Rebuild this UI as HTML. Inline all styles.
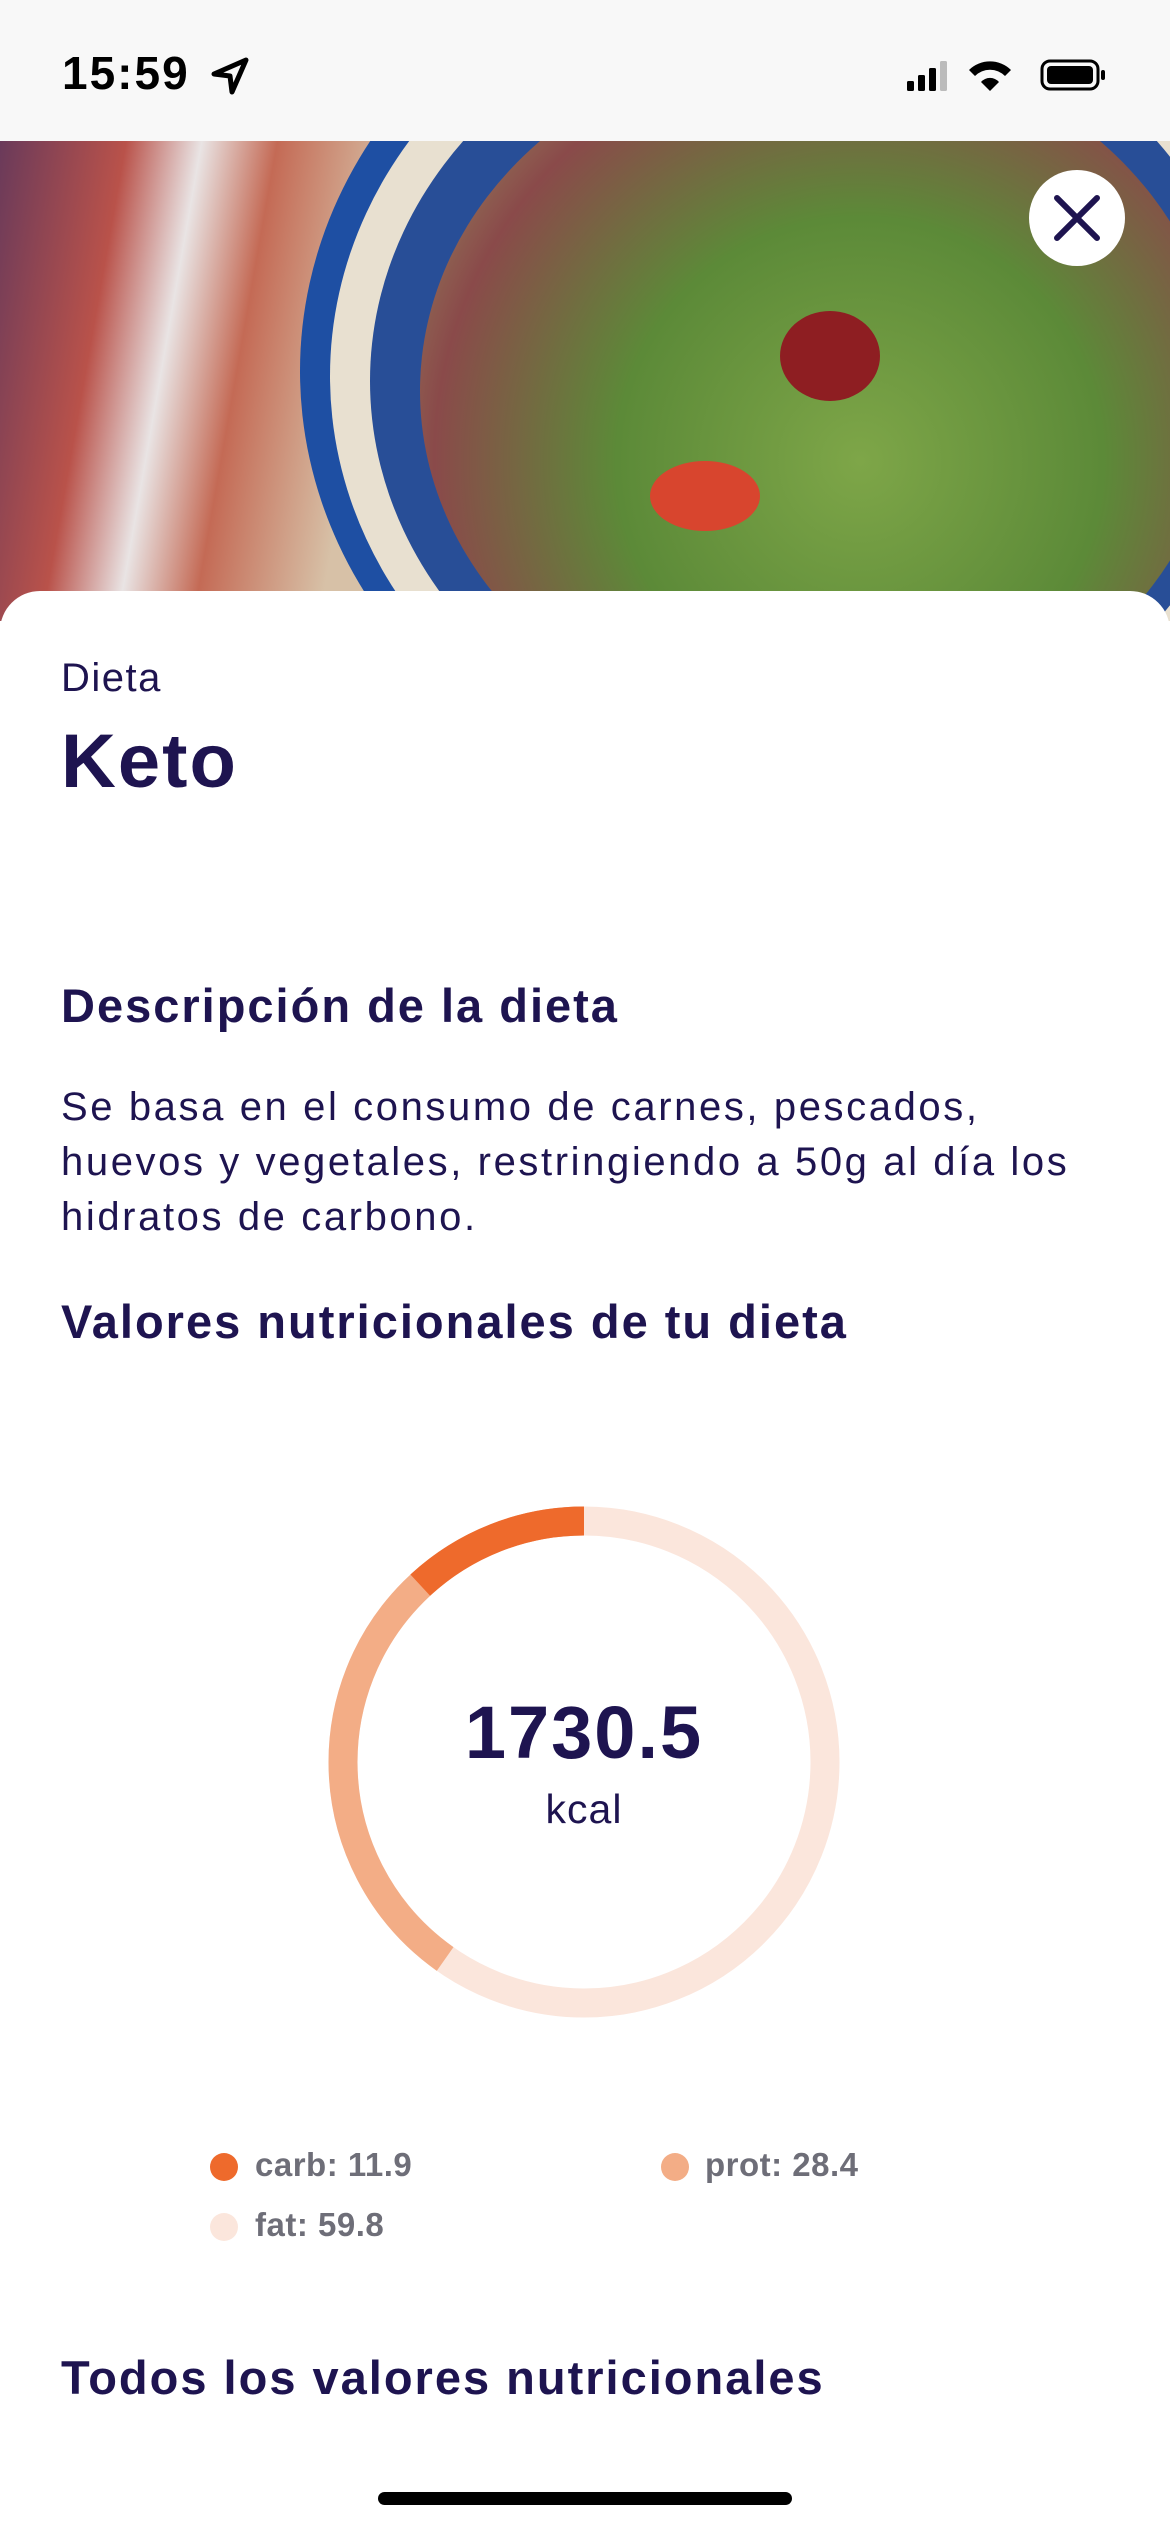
<!DOCTYPE html>
<html><head><meta charset="utf-8"><style>
*{margin:0;padding:0;box-sizing:border-box}
body{width:1170px;height:2532px;position:relative;background:#fff;font-family:"Liberation Sans",sans-serif;color:#1e1450;overflow:hidden}
.sb{position:absolute;left:0;top:0;width:1170px;height:141px;background:#f8f8f8}
.photo{position:absolute;left:0;top:141px;width:1170px;height:480px;overflow:hidden;background:#c9b49a}
.card{position:absolute;left:0;top:591px;width:1170px;height:1941px;background:#fff;border-radius:40px 40px 0 0}
.t{position:absolute;left:61px;white-space:nowrap}
.h{font-size:47px;font-weight:bold;letter-spacing:2px}
</style></head><body>
<div class="sb">
<div style="position:absolute;left:62px;top:46px;font-size:46px;font-weight:bold;color:#000;letter-spacing:2px">15:59</div>
<svg style="position:absolute;left:210px;top:56px" width="40" height="40" viewBox="0 0 40 40"><path d="M36 4 L4 18 L20 20 L22 36 Z" fill="none" stroke="#000" stroke-width="5" stroke-linejoin="round"/></svg>
<svg style="position:absolute;left:905px;top:55px" width="215" height="40" viewBox="0 0 215 40">
<rect x="2" y="26" width="7" height="10" rx="1.5"/><rect x="13" y="20" width="7" height="16" rx="1.5"/><rect x="24" y="13" width="7" height="23" rx="1.5"/><rect x="35" y="6" width="7" height="30" rx="1.5" fill="#bbb"/>
<path d="M64 15 A30 30 0 0 1 106 15 L100 21 A21 21 0 0 0 70 21Z M76 27 A12 12 0 0 1 94 27 L85 36Z"/>
<rect x="137" y="6" width="56" height="28" rx="8" fill="none" stroke="#000" stroke-width="3"/><rect x="142" y="11" width="46" height="18" rx="4"/><rect x="196" y="15" width="4" height="10" rx="2"/>
</svg>
</div>
<div class="photo">
<div style="position:absolute;left:0;top:0;width:420px;height:480px;background:linear-gradient(100deg,#6a3a5a 0%,#b9524a 25%,#e9e4e4 40%,#c46a55 55%,#d7c1a7 80%)"></div>
<div style="position:absolute;left:300px;top:-220px;width:1000px;height:900px;border-radius:50%;background:#1e4fa3"></div>
<div style="position:absolute;left:330px;top:-190px;width:950px;height:850px;border-radius:50%;background:#e8e0d0"></div>
<div style="position:absolute;left:370px;top:-150px;width:880px;height:780px;border-radius:50%;background:#284e97"></div>
<div style="position:absolute;left:420px;top:-100px;width:800px;height:700px;border-radius:50%;background:radial-gradient(circle at 55% 60%,#7ea648 0%,#5c8a38 40%,#8a4a4a 70%,#9bb36a 100%)"></div>
<div style="position:absolute;left:780px;top:170px;width:100px;height:90px;border-radius:50%;background:#8e1e22"></div>
<div style="position:absolute;left:650px;top:320px;width:110px;height:70px;border-radius:50%;background:#d8452e"></div>
<div style="position:absolute;left:1029px;top:29px;width:96px;height:96px;border-radius:50%;background:#fff"></div>
<svg style="position:absolute;left:1029px;top:29px" width="96" height="96" viewBox="0 0 96 96"><path d="M28 28 L68 68 M68 28 L28 68" stroke="#1e1450" stroke-width="6" stroke-linecap="round"/></svg>
</div>
<div class="card"></div>
<div class="t" style="top:656px;font-size:40px;letter-spacing:1.5px">Dieta</div>
<div class="t" style="top:718px;font-size:76px;font-weight:bold;letter-spacing:2px">Keto</div>
<div class="t h" style="top:978px">Descripción de la dieta</div>
<div class="t" style="top:1080px;font-size:40px;line-height:55px;letter-spacing:2.6px">Se basa en el consumo de carnes, pescados,<br>huevos y vegetales, restringiendo a 50g al día los<br>hidratos de carbono.</div>
<div class="t h" style="top:1294px">Valores nutricionales de tu dieta</div>
<svg style="position:absolute;left:324px;top:1502px" width="520" height="520" viewBox="0 0 520 520">
<g transform="translate(260,260) scale(-1,1) rotate(-90)">
<circle r="241" fill="none" stroke="#fbe6dc" stroke-width="29"/>
<circle r="241" fill="none" stroke="#f3ad86" stroke-width="29" stroke-dasharray="609 2000"/>
<circle r="241" fill="none" stroke="#ee6a2c" stroke-width="29" stroke-dasharray="180 2000"/>
</g></svg>
<div style="position:absolute;left:334px;width:500px;top:1690px;text-align:center;font-size:74px;font-weight:bold;letter-spacing:2px">1730.5</div>
<div style="position:absolute;left:384px;width:400px;top:1786px;text-align:center;font-size:41px;letter-spacing:1px">kcal</div>
<div style="position:absolute;left:210px;top:2153px;width:28px;height:28px;border-radius:50%;background:#ee6a2c"></div>
<div style="position:absolute;left:255px;top:2146px;font-size:33px;font-weight:bold;color:#6e6e78;letter-spacing:0.5px">carb: 11.9</div>
<div style="position:absolute;left:661px;top:2153px;width:28px;height:28px;border-radius:50%;background:#f3ad86"></div>
<div style="position:absolute;left:705px;top:2146px;font-size:33px;font-weight:bold;color:#6e6e78;letter-spacing:0.5px">prot: 28.4</div>
<div style="position:absolute;left:210px;top:2213px;width:28px;height:28px;border-radius:50%;background:#fbe6dc"></div>
<div style="position:absolute;left:255px;top:2206px;font-size:33px;font-weight:bold;color:#6e6e78;letter-spacing:0.5px">fat: 59.8</div>
<div class="t h" style="top:2350px">Todos los valores nutricionales</div>
<div style="position:absolute;left:378px;top:2492px;width:414px;height:13px;border-radius:7px;background:#000"></div>
</body></html>
